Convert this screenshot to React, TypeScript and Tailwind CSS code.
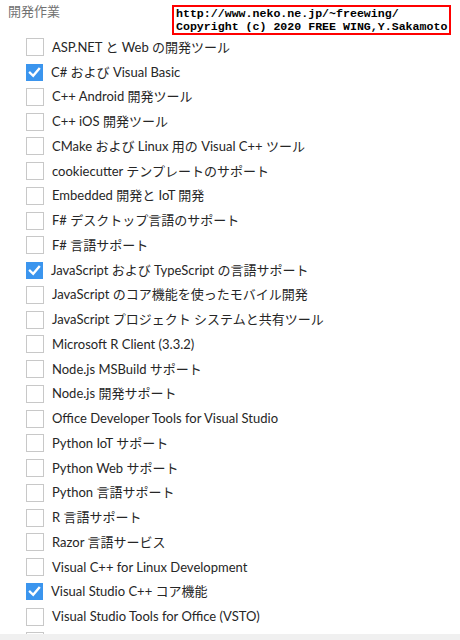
import React from "react";

const items: { label: string; checked?: boolean }[] = [
  { label: "ASP.NET と Web の開発ツール" },
  { label: "C# および Visual Basic", checked: true },
  { label: "C++ Android 開発ツール" },
  { label: "C++ iOS 開発ツール" },
  { label: "CMake および Linux 用の Visual C++ ツール" },
  { label: "cookiecutter テンプレートのサポート" },
  { label: "Embedded 開発と IoT 開発" },
  { label: "F# デスクトップ言語のサポート" },
  { label: "F# 言語サポート" },
  { label: "JavaScript および TypeScript の言語サポート", checked: true },
  { label: "JavaScript のコア機能を使ったモバイル開発" },
  { label: "JavaScript プロジェクト システムと共有ツール" },
  { label: "Microsoft R Client (3.3.2)" },
  { label: "Node.js MSBuild サポート" },
  { label: "Node.js 開発サポート" },
  { label: "Office Developer Tools for Visual Studio" },
  { label: "Python IoT サポート" },
  { label: "Python Web サポート" },
  { label: "Python 言語サポート" },
  { label: "R 言語サポート" },
  { label: "Razor 言語サービス" },
  { label: "Visual C++ for Linux Development" },
  { label: "Visual Studio C++ コア機能", checked: true },
  { label: "Visual Studio Tools for Office (VSTO)" },
  { label: "Windows デスクトップ アプリの言語サポート" },
];

function Box({ checked }: { checked?: boolean }) {
  if (checked) {
    return (
      <span className="flex h-[17px] w-[17px] shrink-0 items-center justify-center bg-[#3b95ee]">
        <svg width="13" height="13" viewBox="0 0 13 13" fill="none">
          <path d="M2 6.8 L5.2 9.8 L11 3" stroke="#fff" strokeWidth="2.4" strokeLinecap="square" />
        </svg>
      </span>
    );
  }
  return <span className="h-[18px] w-[18px] shrink-0 border border-[#c8c8c8] bg-white" />;
}

export default function App() {
  return (
    <div
      className="relative flex h-[640px] w-[460px] flex-col overflow-hidden bg-white"
      style={{ fontFamily: 'Lato, "Noto Sans CJK JP", sans-serif' }}
    >
      <div className="flex-1 overflow-hidden">
        <div className="h-[35px] pl-[8px] pt-[2px] text-[13px] leading-[18px] text-[#717171]">開発作業</div>
        <div className="flex flex-col">
          {items.map((it) => (
            <div key={it.label} className="flex h-[24.75px] items-center gap-[8px] pl-[26px]">
              <Box checked={it.checked} />
              <span className="whitespace-nowrap text-[13px] leading-none text-[#262626]">{it.label}</span>
            </div>
          ))}
        </div>
      </div>
      <div className="h-[6px] shrink-0 bg-[#f0f0f0]" />

      <div
        className="absolute left-[172px] top-[5px] whitespace-nowrap border-2 border-[#ff0000] bg-white px-[2px] text-[11.6px] font-bold leading-[13px] text-black"
        style={{ fontFamily: '"Liberation Mono", monospace' }}
      >
        <div>http://www.neko.ne.jp/~freewing/</div>
        <div>Copyright (c) 2020 FREE WING,Y.Sakamoto</div>
      </div>
    </div>
  );
}
